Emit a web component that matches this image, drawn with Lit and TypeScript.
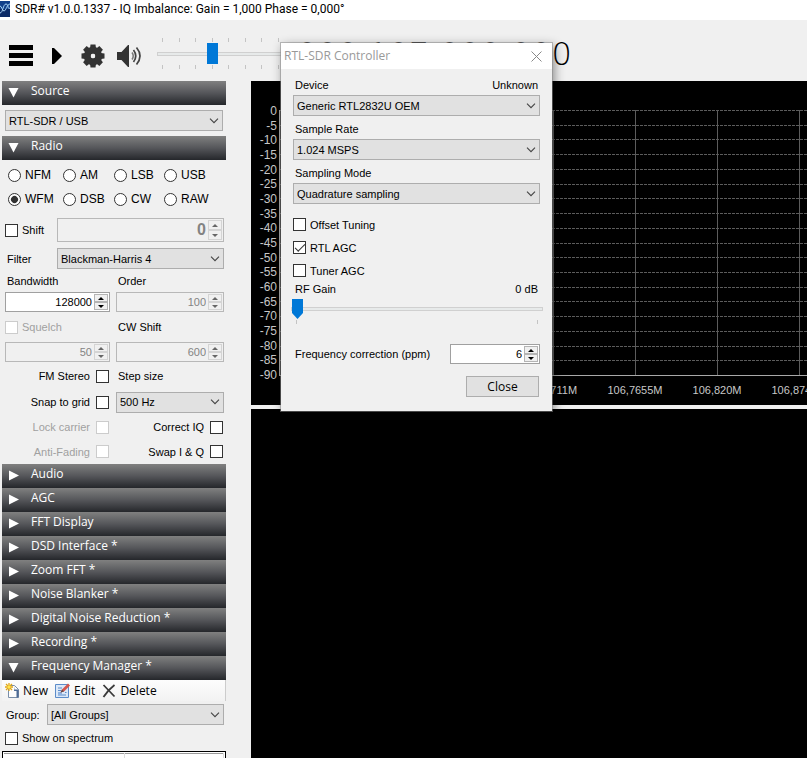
import { LitElement, html, svg, css } from "lit";
import { customElement } from "lit/decorators.js";

const chevron = html`<svg class="chevron" width="10" height="6" viewBox="0 0 10 6" aria-hidden="true">
  <path d="M1 .7 5 4.7 9 .7" fill="none" stroke="#444" stroke-width="1.1" />
</svg>`;

const gearTeeth = [0, 45, 90, 135, 180, 225, 270, 315];

@customElement("app-root")
export class AppRoot extends LitElement {
  static styles = css`
    :host {
      display: flex;
      flex-direction: column;
      height: 100vh;
      overflow: hidden;
      position: relative;
      background: #f0f0f0;
      color: #000;
      font: 11px/14px "Liberation Sans", Arial, sans-serif;
    }
    * { box-sizing: border-box; }
    button, input, select { font: inherit; color: inherit; margin: 0; }
    button { border: 0; padding: 0; background: none; }
    svg { display: block; }

    .titlebar {
      display: flex;
      flex: none;
      align-items: center;
      gap: 5px;
      height: 20px;
      padding-bottom: 2px;
      background: #fff;
      font: 12px/16px Roboto, "Open Sans", sans-serif;
      white-space: nowrap;
    }
    .toolbar {
      display: flex;
      flex: none;
      align-items: center;
      height: 61px;
      padding: 10px 0 0 9px;
    }
    .menu { margin-right: 19px; }
    .play { margin-right: 19px; }
    .gear { margin-right: 12px; }
    .speaker { margin-right: 15px; }
    .volume { display: flex; flex: none; flex-direction: column; width: 127px; padding-bottom: 4px; }
    .frequency {
      flex: none;
      margin-left: 13px;
      padding-bottom: 4px;
      font: 200 32px/36px "DejaVu Sans", sans-serif;
    }

    .range { appearance: none; display: block; width: 100%; height: 21px; background: none; }
    .range::-webkit-slider-runnable-track {
      height: 4px;
      border: 1px solid #d0d0d0;
      background: #e7eaea;
    }
    .range::-webkit-slider-thumb {
      appearance: none;
      width: 11px;
      height: 21px;
      margin-top: -10px;
      background: #0078d7;
    }
    .pointed { height: 20px; }
    .pointed::-webkit-slider-thumb {
      height: 20px;
      margin-top: -9px;
      clip-path: polygon(0 0, 100% 0, 100% 70%, 50% 100%, 0 70%);
    }
    .ticks { display: flex; justify-content: space-between; height: 4px; padding: 0 5px; }
    .ticks i { width: 1px; background: #c4c4c4; }
    .volume .ticks { margin: 1px 0; }

    .workspace { display: flex; flex: 1; min-height: 0; }
    .sidebar {
      display: flex;
      flex: none;
      flex-direction: column;
      width: 226px;
      margin-right: 25px;
      padding-left: 2px;
    }
    .section {
      display: flex;
      flex: none;
      align-items: center;
      width: 100%;
      height: 24px;
      padding-left: 6px;
      gap: 12px;
      background: linear-gradient(#808080, #55565a 50%, #25272b);
      color: #fff;
      font: 12px/16px "Open Sans", "Noto Sans", sans-serif;
      text-align: left;
    }
    .section span { padding-bottom: 4px; }

    .combo { display: grid; flex: 1; align-items: center; min-width: 0; }
    .combo select {
      appearance: none;
      grid-area: 1 / 1;
      width: 100%;
      height: 21px;
      padding: 0 18px 0 3px;
      border: 1px solid #adadad;
      border-radius: 0;
      background: #e1e1e1;
    }
    .chevron { grid-area: 1 / 1; justify-self: end; margin-right: 4px; pointer-events: none; }

    .spin {
      display: flex;
      flex: 1;
      min-width: 0;
      height: 20px;
      padding: 1px;
      border: 1px solid #a0a0a0;
      background: #fff;
    }
    .spin input {
      flex: 1;
      width: 0;
      padding: 0 2px 0 0;
      border: 0;
      background: none;
      text-align: right;
    }
    .arrows { display: flex; flex-direction: column; width: 14px; }
    .arrows button {
      display: grid;
      flex: 1;
      place-items: center;
      border: 1px solid #b4b4b4;
      background: #f0f0f0;
    }
    .spin.off { border-color: #b8b8b8; background: #f0f0f0; color: #838383; }
    .spin.off button { border-color: #d4d4d4; }
    .spin.off input, .spin.off button { color: inherit; }
    .spin.tall { height: 24px; font: bold 16px/20px "Liberation Sans", sans-serif; }

    .box {
      appearance: none;
      display: grid;
      flex: none;
      place-items: center;
      width: 13px;
      height: 13px;
      border: 1px solid #333;
      background: #fff;
    }
    .box:disabled { border-color: #ccc; }
    .box:checked::before {
      content: "";
      width: 9px;
      height: 4px;
      margin-bottom: 3px;
      border: solid #333;
      border-width: 0 0 1px 1px;
      transform: rotate(-45deg);
    }
    .round { border-radius: 50%; }
    .round:checked::before {
      width: 7px;
      height: 7px;
      margin: 0;
      border: 0;
      border-radius: 50%;
      background: #333;
    }
    .check { display: flex; align-items: center; gap: 4px; white-space: nowrap; }
    .check.end { flex-direction: row-reverse; gap: 6px; }
    .check.off { color: #a0a0a0; }

    .source { display: flex; padding: 5px 3px; }
    .radio { display: flex; flex-direction: column; height: 304px; padding: 0 2px 0 3px; }
    .modes {
      display: grid;
      grid-template-columns: 55px 51px 50px 1fr;
      grid-auto-rows: 24px;
      padding: 3px 0 0 3px;
      font-size: 12px;
    }
    .line { display: flex; align-items: center; }
    .lead { flex: none; width: 52px; }
    label.lead { padding-left: 2px; }
    .shift { height: 24px; margin-top: 7px; }
    .filter { height: 21px; margin-top: 6px; }
    .pairs {
      display: grid;
      grid-template-columns: 105px 108px;
      grid-template-rows: 23px 20px 30px 20px 28px 24px 26px 23px;
      column-gap: 6px;
      align-items: center;
    }
    .pairs .text { padding-left: 2px; }
    .pairs .end { padding-right: 1px; }

    .actions {
      display: flex;
      flex: none;
      align-items: center;
      height: 21px;
      padding-left: 3px;
      gap: 7px;
      border-right: 1px solid #ccc;
      background: linear-gradient(#fdfdfd, #f2f2f2);
      font: 12px/16px "Open Sans", "Noto Sans", sans-serif;
    }
    .actions button { display: flex; align-items: center; gap: 4px; }
    .group { flex: none; margin: 3px 2px 0 4px; }
    .group label { width: 41px; }
    .show { flex: none; margin: 6px 0 6px 3px; }
    .plugins { flex: none; padding-top: 1px; }
    .list {
      flex: 1 0 40px;
      padding: 1px;
      border: 1px solid #000;
      background: #fff;
    }
    .list table { width: 100%; border-collapse: collapse; border-top: 1px solid #999; }
    .list th { height: 20px; border-right: 1px solid #ddd; font-weight: normal; }
    .list .name { width: 55%; }

    .displays { display: flex; flex: 1; flex-direction: column; gap: 4px; min-width: 0; }
    .spectrum {
      display: grid;
      flex: none;
      grid-template-columns: 28px 1fr;
      grid-template-rows: 266px 1fr;
      height: 324px;
      padding-top: 29px;
      overflow: hidden;
      background: #000;
      color: #c8c8c8;
    }
    .levels {
      display: flex;
      flex-direction: column;
      justify-content: space-between;
      margin: -6px 0;
      padding-right: 2px;
      font-size: 12px;
      text-align: right;
    }
    .plot { min-width: 0; border: solid #a8a8a8; border-width: 0 0 1px 1px; }
    .freqs { display: flex; grid-column: 2; margin-top: 7px; min-width: 0; padding-left: 233px; }
    .freqs span { flex: none; width: 82px; text-align: center; }
    .waterfall { flex: 1; background: #000; }

    .dialog {
      position: absolute;
      left: 281px;
      top: 43px;
      width: 271px;
      background: #f0f0f0;
      box-shadow: 0 0 0 1px #8888, 2px 3px 10px #0007;
      padding-bottom: 14px;
    }
    .caption {
      display: flex;
      align-items: center;
      justify-content: space-between;
      height: 26px;
      padding: 0 10px 0 3px;
      background: #fff;
      color: #999;
      font: 12px/16px "Open Sans", "Noto Sans", sans-serif;
    }
    .form { display: flex; flex-direction: column; padding: 3px 12px 0; }
    .field { display: flex; justify-content: space-between; height: 23px; padding: 6px 2px 0; }
    .form .check { height: 23px; }
    .form .combo { flex: none; }
    .first { margin-top: 9px; }
    .gain { display: flex; justify-content: space-between; padding: 0 2px; }
    .tuner { margin: 3px -3px 0 -2px; }
    .tuner .ticks { margin-top: 1px; }
    .ppm { justify-content: space-between; margin-top: 20px; padding-left: 2px; }
    .ppm .spin { flex: none; width: 90px; }
    .close {
      align-self: flex-end;
      width: 73px;
      height: 21px;
      margin: 12px 1px 0 0;
      border: 1px solid #adadad;
      background: #e1e1e1;
      font: 12px/16px "Open Sans", "Noto Sans", sans-serif;
    }
  `;

  private section(name: string, open = false) {
    return html`<button class="section" aria-expanded=${open ? "true" : "false"}>
      <svg width="11" height="12" viewBox="0 0 11 12" aria-hidden="true">
        <path d=${open ? "M.5 1h10L5.500 10.500z" : "M1 .5v10L11 5.500z"} fill="#fff" />
      </svg>
      <span>${name}</span>
    </button>`;
  }

  private combo(id: string, value: string, label = "") {
    return html`<div class="combo">
      <select id=${id} aria-label=${label || value}><option>${value}</option></select>
      ${chevron}
    </div>`;
  }

  private spin(id: string, value: string, label: string, off = false, extra = "") {
    const ink = off ? "#666" : "#000";
    return html`<div class="spin ${off ? "off" : ""} ${extra}">
      <input id=${id} type="text" inputmode="numeric" aria-label=${label} .value=${value} ?disabled=${off} />
      <div class="arrows">
        <button aria-label="${label} up" ?disabled=${off}>
          <svg width="6" height="3" viewBox="0 0 6 3"><path d="M0 3 3 0 6 3z" fill=${ink} /></svg>
        </button>
        <button aria-label="${label} down" ?disabled=${off}>
          <svg width="6" height="3" viewBox="0 0 6 3"><path d="M0 0 3 3 6 0z" fill=${ink} /></svg>
        </button>
      </div>
    </div>`;
  }

  private check(text: string, cls = "", off = false, on = false) {
    return html`<label class="check ${cls} ${off ? "off" : ""}">
      <input class="box" type="checkbox" ?disabled=${off} .checked=${on} />${text}
    </label>`;
  }

  private ticks(count: number) {
    return html`<div class="ticks">${Array.from({ length: count }, () => html`<i></i>`)}</div>`;
  }

  private grid() {
    const rows = Array.from({ length: 18 }, (_, i) => Math.round((i * 265) / 18) + 0.5);
    const cols = Array.from({ length: 30 }, (_, i) => 27.5 + 82 * i);
    return html`<svg width="100%" height="265" aria-hidden="true">
      ${rows.map((y) => svg`<line x1="0" x2="100%" y1=${y} y2=${y} stroke="#5c5c5c" stroke-dasharray="3 1" />`)}
      ${cols.map((x) => svg`<line x1=${x} x2=${x} y1="0" y2="265" stroke="#5c5c5c" />`)}
    </svg>`;
  }

  render() {
    const modes = ["NFM", "AM", "LSB", "USB", "WFM", "DSB", "CW", "RAW"];
    const levels = Array.from({ length: 19 }, (_, i) => String(-5 * i));
    const freqs = ["106,711M", "106,7655M", "106,820M", "106,8745M"];
    const plugins = ["Audio", "AGC", "FFT Display", "DSD Interface *", "Zoom FFT *", "Noise Blanker *",
      "Digital Noise Reduction *", "Recording *"];
    return html`
      <header class="titlebar">
        <svg width="10" height="16" viewBox="0 0 10 16" aria-hidden="true">
          <path d="M0 0h10v16H0z" fill="#12408a" />
          <path d="M0 8h10v8H0z" fill="#0b2a66" />
          <path d="M0 12C3 12 3 3 6 3s1 6 4 4M0 5c2 0 2 5 4 5s3-7 6-7" fill="none" stroke="#a9d4f5" />
        </svg>
        <span>SDR# v1.0.0.1337 - IQ Imbalance: Gain = 1,000 Phase = 0,000°</span>
      </header>

      <div class="toolbar">
        <button class="menu" aria-label="Menu">
          <svg width="24" height="21" viewBox="0 0 24 21"><path d="M0 0h24v5H0zM0 8h24v5H0zM0 16h24v5H0z" /></svg>
        </button>
        <button class="play" aria-label="Play">
          <svg width="10" height="16" viewBox="0 0 10 16"><path d="M0 0h2l8 8-8 8H0z" /></svg>
        </button>
        <button class="gear" aria-label="Settings">
          <svg width="24" height="24" viewBox="-12 -12 24 24" fill="#333">
            ${gearTeeth.map((a) => svg`<path d="M-2.500-11.500h5L3.200-6h-6.400z" transform="rotate(${a})" />`)}
            <circle r="5.700" fill="none" stroke="#333" stroke-width="7" />
            <circle r="2.200" fill="#f0f0f0" />
          </svg>
        </button>
        <button class="speaker" aria-label="Volume">
          <svg width="25" height="22" viewBox="0 0 25 22">
            <path d="M0 7h4.500L11 0h1v22h-1L4.500 15H0z" fill="#333" />
            <path d="M15 7.500q2.500 3.500 0 7" fill="none" stroke="#777" stroke-width="1.500" />
            <path d="M16.500 5q4.500 6 0 12M19.500 2.500q7 8.500 0 17" fill="none" stroke="#444" stroke-width="1.700" />
          </svg>
        </button>
        <div class="volume">
          ${this.ticks(8)}
          <input class="range" type="range" min="0" max="7" value="3" aria-label="Audio volume" />
          ${this.ticks(8)}
        </div>
        <div class="frequency">000.107.000.000</div>
      </div>

      <div class="workspace">
        <aside class="sidebar">
          ${this.section("Source", true)}
          <div class="source">${this.combo("source", "RTL-SDR / USB", "Source")}</div>
          ${this.section("Radio", true)}
          <div class="radio">
            <div class="modes">
              ${modes.map((m) => html`<label class="check">
                <input class="box round" type="radio" name="mode" .checked=${m === "WFM"} />${m}
              </label>`)}
            </div>
            <div class="line shift">
              <div class="lead">${this.check("Shift")}</div>
              ${this.spin("shift", "0", "Shift", true, "tall")}
            </div>
            <div class="line filter">
              <label class="lead" for="filter">Filter</label>
              ${this.combo("filter", "Blackman-Harris 4", "Filter")}
            </div>
            <div class="pairs">
              <label class="text" for="bandwidth">Bandwidth</label>
              <label class="text" for="order">Order</label>
              ${this.spin("bandwidth", "128000", "Bandwidth")}
              ${this.spin("order", "100", "Order", true)}
              ${this.check("Squelch", "", true)}
              <label class="text" for="cwshift">CW Shift</label>
              ${this.spin("squelch", "50", "Squelch", true)}
              ${this.spin("cwshift", "600", "CW Shift", true)}
              ${this.check("FM Stereo", "end")}
              <label class="text" for="step">Step size</label>
              ${this.check("Snap to grid", "end")}
              ${this.combo("step", "500 Hz", "Step size")}
              ${this.check("Lock carrier", "end", true)}
              ${this.check("Correct IQ", "end")}
              ${this.check("Anti-Fading", "end", true)}
              ${this.check("Swap I & Q", "end")}
            </div>
          </div>
          <div class="plugins">
            ${plugins.map((p) => this.section(p))}
            ${this.section("Frequency Manager *", true)}
          </div>
          <div class="actions">
            <button>
              <svg width="14" height="15" viewBox="0 0 14 15" aria-hidden="true">
                <path d="M3.500 2.500h6l4 4v8h-10z" fill="#fdfdfd" stroke="#7a8ea8" />
                <path d="M9.500 2.500v4h4v8h-2V8H9z" fill="#4d6b96" />
                <path d="M4 0v8M0 4h8M1 1l6 6M7 1 1 7" stroke="#e0a516" stroke-width="1.300" />
                <circle cx="4" cy="4" r="1.700" fill="#ffe34d" />
              </svg>New
            </button>
            <button>
              <svg width="15" height="15" viewBox="0 0 15 15" aria-hidden="true">
                <path d="M.5 1.500h13v13H.5z" fill="#dbe8f8" stroke="#5c8cc9" />
                <path d="M3 5h4M3 7.500h3M3 12h8M10 9.500h1.500" stroke="#5c8cc9" />
                <path d="M3 9h4v3H3z" fill="#8fb2e0" />
                <path d="M5.500 9.500 7 6.500l6-6 2 2-6 6z" fill="#d4574e" />
                <path d="M5.500 9.500 7 6.500l2 2z" fill="#5d4a48" />
              </svg>Edit
            </button>
            <button>
              <svg width="14" height="14" viewBox="0 0 14 14" aria-hidden="true">
                <path d="M1.500 1 12.500 12.500M12.500 1Q6 6 1.500 13" fill="none" stroke="#3a3a3a" stroke-width="1.800" />
              </svg>Delete
            </button>
          </div>
          <div class="line group">
            <label for="group">Group:</label>
            ${this.combo("group", "[All Groups]", "Group")}
          </div>
          ${this.check("Show on spectrum", "show")}
          <div class="list"><table><tr><th class="name"></th><th></th></tr></table></div>
        </aside>

        <main class="displays">
          <section class="spectrum" aria-label="Spectrum">
            <div class="levels">${levels.map((l) => html`<span>${l}</span>`)}</div>
            <div class="plot">${this.grid()}</div>
            <div class="freqs">${freqs.map((f) => html`<span>${f}</span>`)}</div>
          </section>
          <section class="waterfall" aria-label="Waterfall"></section>
        </main>
      </div>

      <div class="dialog" role="dialog" aria-labelledby="caption">
        <div class="caption">
          <span id="caption">RTL-SDR Controller</span>
          <button aria-label="Close window">
            <svg width="11" height="11" viewBox="0 0 11 11"><path d="m.5.5 10 10M10.500.5l-10 10" stroke="#888" /></svg>
          </button>
        </div>
        <div class="form">
          <div class="field"><label for="device">Device</label><span>Unknown</span></div>
          ${this.combo("device", "Generic RTL2832U OEM", "Device")}
          <div class="field"><label for="rate">Sample Rate</label></div>
          ${this.combo("rate", "1.024 MSPS", "Sample Rate")}
          <div class="field"><label for="sampling">Sampling Mode</label></div>
          ${this.combo("sampling", "Quadrature sampling", "Sampling Mode")}
          ${this.check("Offset Tuning", "first")}
          ${this.check("RTL AGC", "", false, true)}
          ${this.check("Tuner AGC")}
          <div class="gain"><label for="gain">RF Gain</label><span>0 dB</span></div>
          <div class="tuner">
            <input id="gain" class="range pointed" type="range" min="0" max="1" value="0" />
            ${this.ticks(2)}
          </div>
          <div class="line ppm">
            <label for="ppm">Frequency correction (ppm)</label>
            ${this.spin("ppm", "6", "Frequency correction (ppm)")}
          </div>
          <button class="close">Close</button>
        </div>
      </div>
    `;
  }
}
